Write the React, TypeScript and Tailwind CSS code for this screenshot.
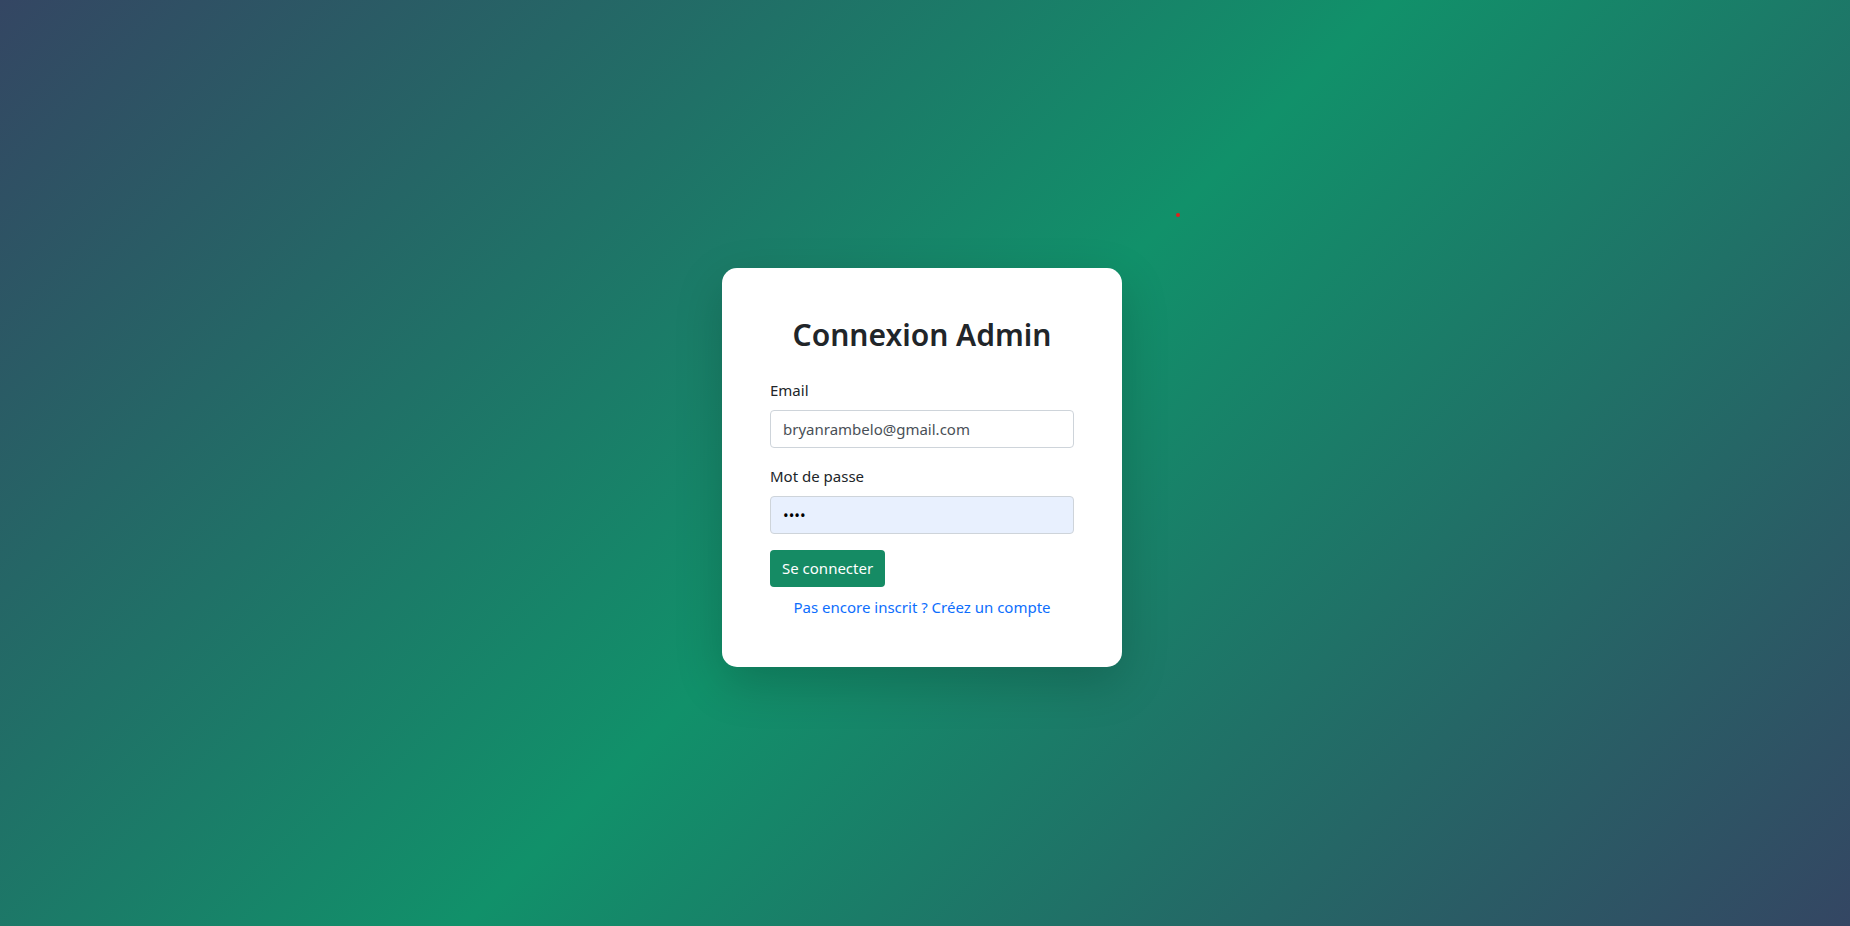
import React, { useState } from 'react';

const App: React.FC = () => {
  const [email, setEmail] = useState('bryanrambelo@gmail.com');
  const [password, setPassword] = useState('1234');

  return (
    <div className="relative flex min-h-[926px] w-full items-center justify-center bg-[linear-gradient(135deg,#344663_0%,#11916a_50%,#344663_100%)] pr-[6px] pt-[9px] font-['Noto_Sans',sans-serif]">
      <span className="absolute left-[1176px] top-[213px] h-[4px] w-[4px] rounded-full bg-[#e0201b]" />
      <div className="w-[400px] rounded-[15px] bg-white p-12 shadow-[0_1rem_3rem_rgba(0,0,0,0.18)]">
        <h2 className="mb-6 text-center text-[30px] font-semibold leading-[38px] text-[#212529]">Connexion Admin</h2>
        <form onSubmit={(e) => e.preventDefault()}>
          <div className="mb-4">
            <label className="mb-2 block text-[15px] leading-6 text-[#212529]">Email</label>
            <input
              type="email"
              value={email}
              onChange={(e) => setEmail(e.target.value)}
              className="block h-[38px] w-full rounded-[4px] border border-[#ced4da] bg-white px-3 text-[15px] text-[#495057] outline-none"
            />
          </div>
          <div className="mb-4">
            <label className="mb-2 block text-[15px] leading-6 text-[#212529]">Mot de passe</label>
            <input
              type="password"
              value={password}
              onChange={(e) => setPassword(e.target.value)}
              className="block h-[38px] w-full rounded-[4px] border border-[#ced4da] bg-[#e8f0fe] px-3 text-[15px] text-black outline-none"
            />
          </div>
          <button
            type="submit"
            className="h-[37px] rounded-[4px] bg-[#158b64] px-3 text-[15px] text-white"
          >
            Se connecter
          </button>
          <p className="mt-2 text-center text-[15px] leading-6">
            <a href="#" className="text-[#0d6efd]">Pas encore inscrit ? Créez un compte</a>
          </p>
        </form>
      </div>
    </div>
  );
};

export default App;
